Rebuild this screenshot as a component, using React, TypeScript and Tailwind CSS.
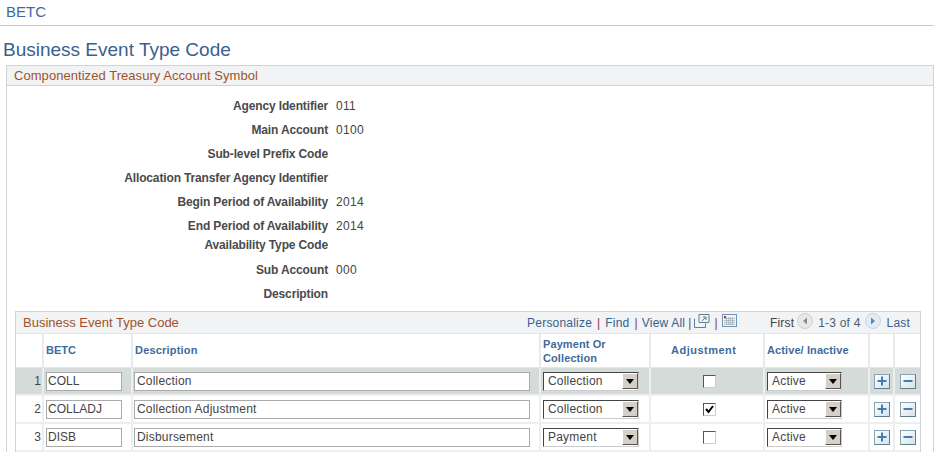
const font = "font-['Liberation_Sans',Arial,sans-serif]";

const fields = [
  { label: 'Agency Identifier', value: '011', cls: 'h-6 items-center' },
  { label: 'Main Account', value: '0100', cls: 'h-6 items-center' },
  { label: 'Sub-level Prefix Code', value: '', cls: 'h-6 items-center' },
  { label: 'Allocation Transfer Agency Identifier', value: '', cls: 'h-6 items-center' },
  { label: 'Begin Period of Availability', value: '2014', cls: 'h-6 items-center' },
  { label: 'End Period of Availability', value: '2014', cls: 'h-6 items-center' },
  { label: 'Availability Type Code', value: '', cls: 'h-5 items-start leading-[14px]' },
  { label: 'Sub Account', value: '000', cls: 'h-6 items-center' },
  { label: 'Description', value: '', cls: 'h-6 items-center' },
];

const rows = [
  { n: 1, betc: 'COLL', desc: 'Collection', pay: 'Collection', adj: false },
  { n: 2, betc: 'COLLADJ', desc: 'Collection Adjustment', pay: 'Collection', adj: true },
  { n: 3, betc: 'DISB', desc: 'Disbursement', pay: 'Payment', adj: false },
];

const cols = 'grid grid-cols-[28px_89px_408px_110px_114px_105px_25px_25px]';

function Select({ value, width }: { value: string; width: string }) {
  return (
    <div className={`flex h-[19px] items-center border border-[#444] border-b-[#ccc] border-r-[#ccc] bg-white ${width}`}>
      <span className="flex-1 truncate pl-1 text-xs tracking-[0.2px] text-[#444]">{value}</span>
      <span className="flex h-[16px] w-[16px] items-center justify-center border border-[#d4d0c8] border-b-[#555] border-r-[#555] border-l-white border-t-white bg-[#d4d0c8]">
        <svg width="8" height="5" viewBox="0 0 8 5"><path d="M0 0h8L4 5z" fill="#000" /></svg>
      </span>
    </div>
  );
}

function SquareBtn({ minus }: { minus?: boolean }) {
  return (
    <div className="flex h-[15px] w-[16px] items-center justify-center border border-[#8aa3ae] border-b-[#5f7d8a] border-r-[#5f7d8a] bg-gradient-to-br from-white to-[#d5e3ea]">
      <svg width="10" height="10" viewBox="0 0 10 10">
        <rect x="0.5" y="4" width="9" height="2" fill="#3f7cb8" />
        {!minus && <rect x="4" y="0.5" width="2" height="9" fill="#3f7cb8" />}
      </svg>
    </div>
  );
}

function RoundBtn({ dir, on }: { dir: 'left' | 'right'; on?: boolean }) {
  return (
    <svg width="16" height="16" viewBox="0 0 16 16" className="mb-1">
      <circle cx="8" cy="8" r="7.5" fill={on ? '#e3ebf5' : '#e8e8e8'} stroke={on ? '#c5d4e6' : '#cfcfcf'} />
      <path d={dir === 'left' ? 'M10 4.5v7L6 8z' : 'M6 4.5v7L10 8z'} fill={on ? '#5b86c4' : '#8a8a8a'} />
    </svg>
  );
}

function Bar({ cls }: { cls: string }) {
  return <span className={`text-[#8a3a4a] ${cls}`}>|</span>;
}

export default function App() {
  return (
    <div className={`${font} h-[453px] w-[934px] overflow-hidden bg-white`}>
      <div className="flex h-[26px] items-center border-b border-[#c9cdd0] pl-[6px] text-[15px] text-[#3e6a9c]">BETC</div>
      <h1 className="mt-[12px] h-[27px] pl-[3px] text-[19px] leading-[24px] text-[#39618f]">Business Event Type Code</h1>

      <div className="ml-[6px] border-l border-r border-t border-[#cfd4d6]">
        <div className="flex h-[20px] items-center border-b border-[#cfd4d6] bg-[#f1f3f4] pl-[7px] text-[13px] tracking-[0.05px] text-[#a0522d]">
          Componentized Treasury Account Symbol
        </div>

        <div className="pt-[8px] text-xs">
          {fields.map((f) => (
            <div key={f.label} className={`flex ${f.cls}`}>
              <span className="w-[321px] text-right font-bold tracking-[-0.14px] text-[#4a4a4a]">{f.label}</span>
              <span className="ml-2 tracking-[0.3px] text-[#444]">{f.value}</span>
            </div>
          ))}
        </div>

        <div className="ml-[8px] mt-[5px] w-[906px] border-l border-r border-t border-[#cfd4d6]">
          <div className="flex h-[21px] items-center bg-[#f1f3f4] pl-[7px] pr-[10px] text-xs tracking-[0.2px]">
            <span className="text-[13px] tracking-normal text-[#a0522d]">Business Event Type Code</span>
            <div className="ml-auto flex items-center text-[#39618f]">
              <span>Personalize</span>
              <Bar cls="ml-[5px] mr-[5px]" />
              <span>Find</span>
              <Bar cls="ml-[5px] mr-[4px]" />
              <span>View All</span>
              <Bar cls="ml-[3px] mr-[2px]" />
              <svg width="16" height="14" viewBox="0 0 16 14" className="mb-1">
                <path d="M.5 4.5v9h11v-4M5 .5h10v8H5z" fill="none" stroke="#5f7f93" />
                <path d="M8 7l4-4M9 3h3v3" fill="none" stroke="#5f7f93" />
              </svg>
              <Bar cls="ml-[5px] mr-[4px]" />
              <svg width="15" height="13" viewBox="0 0 15 13" className="mb-1">
                <rect x=".5" y=".5" width="14" height="12" fill="#f2f5f8" stroke="#6f96b8" />
                <path d="M2 4.5h11M2 6.5h11M2 8.5h11M2 10.5h11M4.5 3v8M6.5 3v8M8.5 3v8M10.5 3v8" stroke="#a8b0b8" strokeWidth=".8" />
                <rect x="2" y="2" width="2" height="2" fill="#e0201c" />
              </svg>
              <span className="ml-[33px] text-[#444]">First</span>
              <span className="ml-[3px]"><RoundBtn dir="left" /></span>
              <span className="ml-[5px] mr-[4px] text-[#4a5f78]">1-3 of 4</span>
              <RoundBtn dir="right" on />
              <span className="ml-[6px]">Last</span>
            </div>
          </div>

          <div className={`${cols} h-[35px] border-y border-[#e4e7e8] pb-[2px] text-[11px] font-bold leading-[14px] tracking-[0.1px] text-[#3f6b9c]`}>
            <div className="-mb-[2px] border-r-2 border-[#e8eaeb]" />
            <div className="-mb-[2px] flex items-center border-r-2 border-[#e8eaeb] pb-[2px] pl-[2px] tracking-normal">BETC</div>
            <div className="-mb-[2px] flex items-center border-r-2 border-[#e8eaeb] pb-[2px] pl-[2px] tracking-[0.2px]">Description</div>
            <div className="-mb-[2px] flex items-center border-r-2 border-[#e8eaeb] pl-[2px]">Payment Or<br />Collection</div>
            <div className="-mb-[2px] flex items-center border-r-2 border-[#e8eaeb] pb-[2px] pl-[20px] tracking-[0.5px]">Adjustment</div>
            <div className="-mb-[2px] flex items-center border-r-2 border-[#e8eaeb] pb-[2px] pl-[2px]">Active/ Inactive</div>
            <div className="-mb-[2px] border-r-2 border-[#e8eaeb]" />
            <div />
          </div>

          {rows.map((r) => (
            <div
              key={r.n}
              className={`${cols} h-[28px] border-b-2 border-[#eceeef] text-xs text-[#444] ${r.n === 1 ? 'bg-[#d5dbd9]' : 'bg-white'}`}
            >
              <div className="flex items-center justify-end border-r-2 border-[#eceeef] pr-[1px]">{r.n}</div>
              <div className="flex items-center border-r-2 border-[#eceeef] pl-[2px]">
                <div className="flex h-[19px] w-[76px] items-center border border-[#aaa] bg-white pl-[1px]">{r.betc}</div>
              </div>
              <div className="flex items-center border-r-2 border-[#eceeef] pl-[1px]">
                <div className="flex h-[19px] w-[396px] items-center border border-[#aaa] bg-white pl-[2px] tracking-[0.2px]">{r.desc}</div>
              </div>
              <div className="flex items-center border-r-2 border-[#eceeef] pl-[2px]">
                <Select value={r.pay} width="w-[96px]" />
              </div>
              <div className="flex items-center border-r-2 border-[#eceeef] pl-[52px]">
                <div className="flex h-[13px] w-[13px] items-center justify-center border border-[#555] border-b-[#ccc] border-r-[#ccc] bg-white">
                  {r.adj && (
                    <svg width="9" height="9" viewBox="0 0 9 9"><path d="M1 4l2.5 3L8 1" fill="none" stroke="#000" strokeWidth="2" /></svg>
                  )}
                </div>
              </div>
              <div className="flex items-center border-r-2 border-[#eceeef] pl-[2px]">
                <Select value="Active" width="w-[75px]" />
              </div>
              <div className="flex items-center justify-center border-r-2 border-[#eceeef]"><SquareBtn /></div>
              <div className="flex items-center justify-center"><SquareBtn minus /></div>
            </div>
          ))}
        </div>
      </div>
    </div>
  );
}
